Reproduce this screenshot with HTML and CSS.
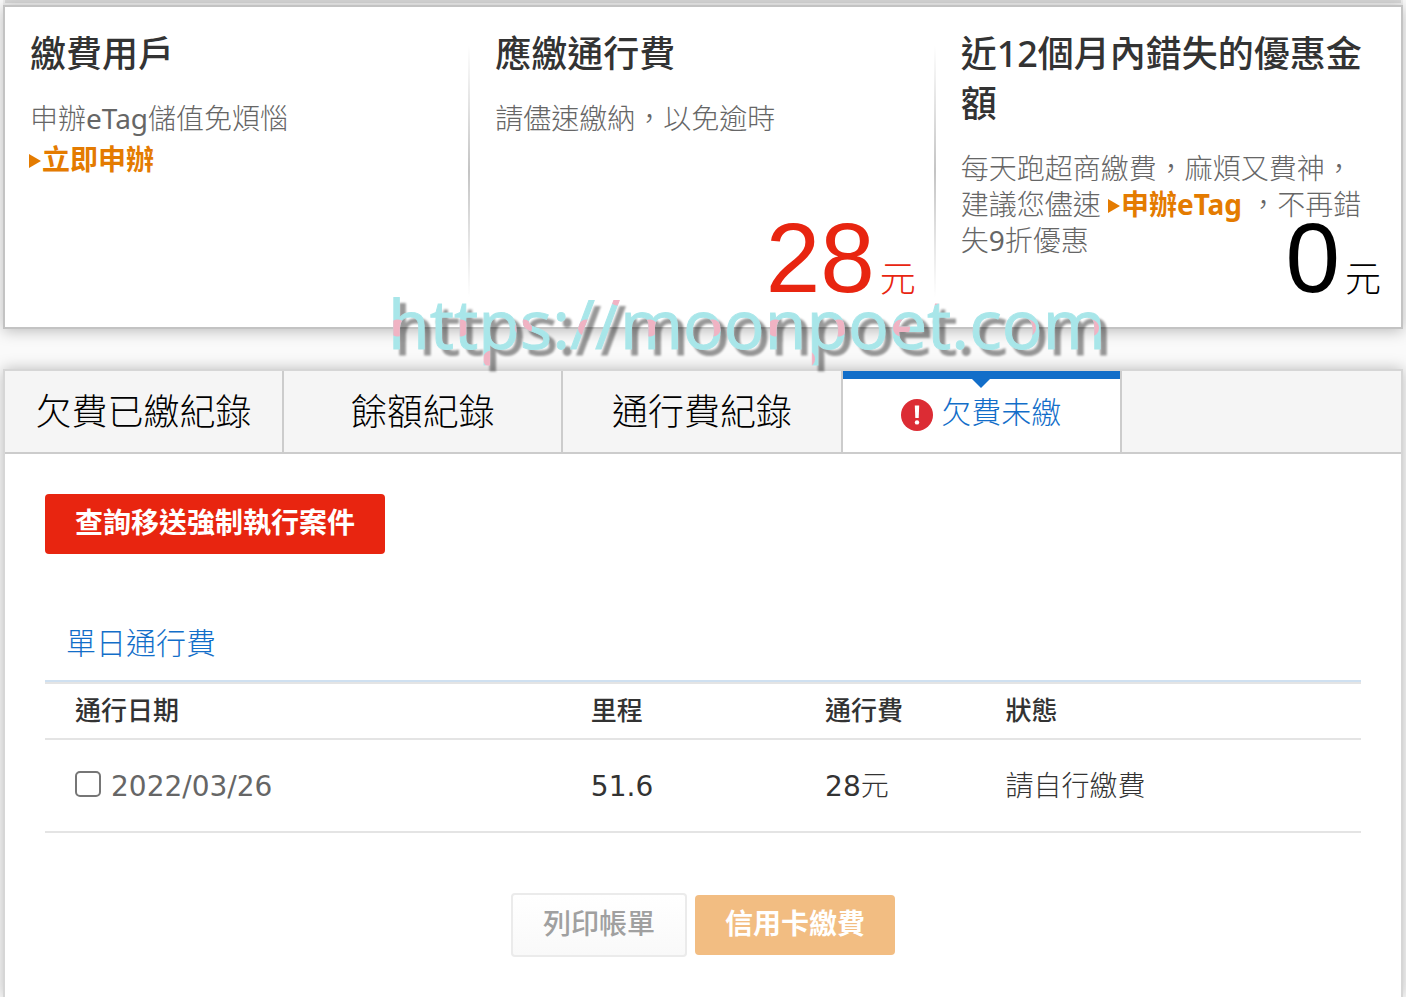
FILE: index.html
```html
<!DOCTYPE html>
<html lang="zh-TW">
<head>
    <meta charset="UTF-8">
    <meta name="viewport" content="width=device-width, initial-scale=1.0">
    <title>欠費未繳</title>
    <link rel="stylesheet" href="styles.css">
</head>
<body>
    <div class="top-strip"></div>

    <!-- Account summary -->
    <section class="summary">
        <div class="summary-col">
            <h2>繳費用戶</h2>
            <p>申辦<span class="latin">eTag</span>儲值免煩惱</p>
            <a class="apply apply-row" href="#">立即申辦</a>
        </div>
        <div class="summary-col">
            <h2>應繳通行費</h2>
            <p>請儘速繳納，以免逾時</p>
            <div class="amount due"><strong>28</strong>元</div>
        </div>
        <div class="summary-col">
            <h2>近12個月內錯失的優惠金額</h2>
            <p>每天跑超商繳費，麻煩又費神，建議您儘速 <a class="apply" href="#">申辦eTag</a> ，不再錯失<span class="latin">9</span>折優惠</p>
            <div class="amount"><strong>0</strong>元</div>
        </div>
        <div class="watermark">https://moonpoet.com</div>
    </section>

    <!-- Records -->
    <main class="records">
        <nav class="tabs">
            <a class="tab" href="#">欠費已繳紀錄</a>
            <a class="tab" href="#">餘額紀錄</a>
            <a class="tab" href="#">通行費紀錄</a>
            <a class="tab active" href="#">
                <svg class="alert" viewBox="0 0 32 32" aria-hidden="true">
                    <circle cx="16" cy="16" r="16" fill="#dc2c34"/>
                    <path d="M13.8 6.5h4.4l-.5 12.5h-3.4z" fill="#fff"/>
                    <circle cx="16" cy="23.4" r="2.2" fill="#fff"/>
                </svg>
                欠費未繳
            </a>
        </nav>

        <div class="content">
            <button type="button" class="btn btn-red">查詢移送強制執行案件</button>

            <h3>單日通行費</h3>
            <table class="tolls">
                <thead>
                    <tr>
                        <th class="col-date">通行日期</th>
                        <th class="col-km">里程</th>
                        <th class="col-fee">通行費</th>
                        <th>狀態</th>
                    </tr>
                </thead>
                <tbody>
                    <tr>
                        <td>
                            <label class="date"><input type="checkbox"><span class="latin">2022/03/26</span></label>
                        </td>
                        <td><span class="latin">51.6</span></td>
                        <td><span class="latin">28</span>元</td>
                        <td>請自行繳費</td>
                    </tr>
                </tbody>
            </table>

            <div class="actions">
                <button type="button" class="btn btn-print" disabled>列印帳單</button>
                <button type="button" class="btn btn-pay" disabled>信用卡繳費</button>
            </div>
        </div>
    </main>
</body>
</html>
```

FILE: styles.css
```css
* { box-sizing: border-box; }
body {
    font-family: "Noto Sans", "Noto Sans CJK TC", sans-serif;
    font-size: 28px;
    font-weight: 300;
    line-height: 36px;
    background-color: #fafafa;
    color: #333;
    display: flex;
    flex-direction: column;
    min-height: 100vh;
    margin: 0;
}
h2, h3, p { margin: 0; }
.latin { font-weight: 400; }

.top-strip {
    height: 5px;
    margin: 0 3px;
    background: #d9d9d9;
    border: 2px solid #eee;
    border-top: none;
}

/* summary */
.summary {
    position: relative;
    display: grid;
    grid-template-columns: repeat(3, 1fr);
    margin: 0 3px;
    min-height: 324px;
    background: #fff;
    border: 2px solid #c3c3c3;
    box-shadow: 0 2px 14px rgba(0,0,0,0.25);
}
.summary-col {
    position: relative;
    padding: 22px 30px 30px 25px;
}
.summary-col:not(:nth-child(3)) {
    background: linear-gradient(#fff, #c4c4c4 50%, #fff) no-repeat right 38px / 2px 252px;
}
h2 {
    font-size: 36px;
    font-weight: 500;
    line-height: 50px;
    margin-bottom: 21px;
}
.summary p { color: #666; }
.apply {
    color: #e47b00;
    font-weight: 700;
    text-decoration: none;
    white-space: nowrap;
}
.apply::before {
    content: "";
    display: inline-block;
    border-left: 12px solid #e47b00;
    border-top: 7px solid transparent;
    border-bottom: 7px solid transparent;
    margin-right: 1px;
    vertical-align: 2px;
}
.apply-row {
    display: block;
    margin: 5px 0 0 -1px;
}
.amount {
    position: absolute;
    right: 20px;
    bottom: 2px;
    color: #000;
    font-size: 36px;
    line-height: 92px;
}
.amount strong {
    margin-right: 5px;
    font-family: "Liberation Sans", Arial, sans-serif;
    font-size: 98px;
    font-weight: 400;
}
.due { color: #e82510; }

.watermark {
    position: absolute;
    left: 383px;
    top: 270px;
    z-index: 2;
    font-family: "Open Sans", sans-serif;
    font-size: 68px;
    font-weight: 400;
    line-height: 92px;
    color: transparent;
    -webkit-text-stroke: 1px transparent;
    background-color: #a8e6e9;
    background-image:
        radial-gradient(circle, #f0b3c3 8px, transparent 9px),
        radial-gradient(circle, #f0b3c3 8px, transparent 9px);
    background-size: 63px 62px;
    background-position: -22px 20px, 9px 51px;
    -webkit-background-clip: text;
    background-clip: text;
    filter: drop-shadow(6px 6px 1px rgba(0,0,0,0.4));
    pointer-events: none;
    white-space: nowrap;
}

/* records */
.records {
    flex: 1;
    margin: 40px 3px 0;
    background: #fff;
    border: 2px solid #d6d6d6;
    border-bottom: none;
    box-shadow: 0 0 14px rgba(0,0,0,0.25);
}
.tabs {
    display: flex;
    height: 83px;
    background: #f5f5f5;
    border-bottom: 2px solid #ccc;
}
.tab {
    position: relative;
    flex: 0 0 20%;
    display: flex;
    align-items: center;
    justify-content: center;
    gap: 8px;
    border-right: 2px solid #ccc;
    color: #000;
    font-size: 36px;
    text-decoration: none;
}
.tab.active {
    background: linear-gradient(#126ec9, #126ec9) no-repeat top / 100% 8px #fff;
    color: #126ec9;
    font-size: 30px;
}
.tab.active::after {
    content: "";
    position: absolute;
    top: 8px;
    left: 50%;
    margin-left: -9px;
    border: 9px solid transparent;
    border-top-color: #126ec9;
    border-bottom: none;
}
.alert {
    width: 32px;
    height: 32px;
    margin-top: 6px;
}

.content { padding: 40px; }
.btn {
    height: 60px;
    padding: 0 30px 4px;
    border: none;
    border-radius: 4px;
    font: inherit;
    font-weight: 700;
    color: #fff;
    cursor: pointer;
}
.btn-red {
    display: block;
    background: #e82510;
}
h3 {
    margin: 71px 0 19px;
    padding: 0 21px;
    font-size: 30px;
    font-weight: 300;
    color: #126ec9;
}

.tolls {
    width: 100%;
    table-layout: fixed;
    border-collapse: separate;
    border-spacing: 0;
    border-top: 2px solid #cfe0f0;
    text-align: left;
}
.tolls th, .tolls td {
    padding: 0 0 0 30px;
    border-bottom: 2px solid #e4e4e4;
}
.tolls th {
    height: 58px;
    padding-bottom: 3px;
    border-top: 2px solid #e4e4e4;
    font-size: 26px;
    font-weight: 500;
}
.tolls td {
    height: 93px;
    padding-top: 2px;
    font-family: "DejaVu Sans", "Noto Sans CJK TC", sans-serif;
}
.col-date { width: 39.2%; }
.col-km { width: 17.8%; }
.col-fee { width: 13.7%; }
.date {
    display: flex;
    align-items: center;
    gap: 10px;
    color: #666;
}
.date input {
    appearance: none;
    width: 26px;
    height: 26px;
    margin: 0 0 6px;
    background: #fff;
    border: 2px solid #767676;
    border-radius: 5px;
}
.date input:checked { background: #126ec9; }

.actions {
    display: flex;
    align-items: center;
    justify-content: center;
    gap: 8px;
    margin-top: 60px;
}
.btn:disabled { cursor: default; }
.btn-print {
    height: 64px;
    border: 2px solid #ebebeb;
    background: linear-gradient(#fff, #f9f9f9);
    color: #a0a0a0;
    font-weight: 500;
}
.btn-pay { background: #f2bd82; }
```
